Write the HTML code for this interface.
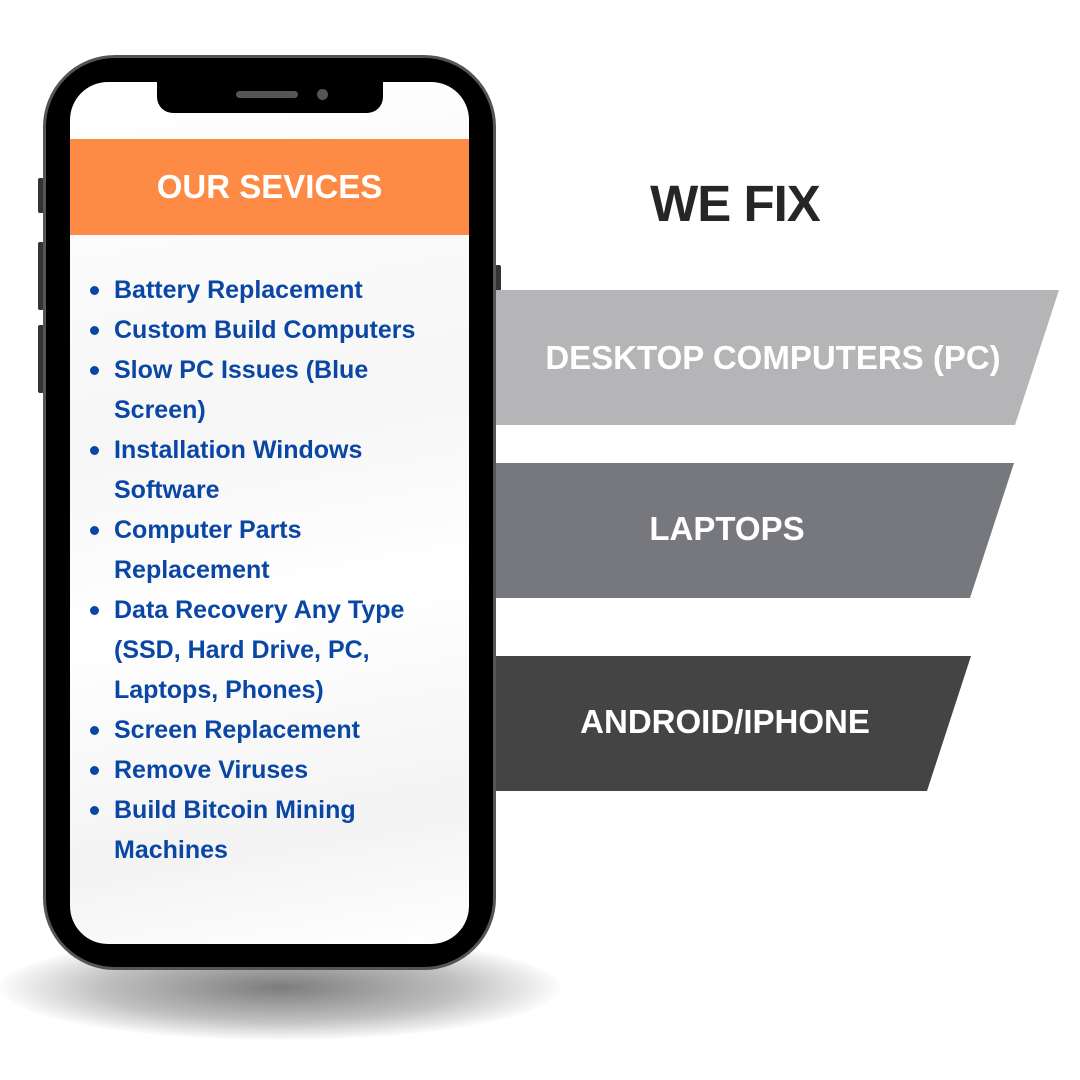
<!DOCTYPE html>
<html><head><meta charset="utf-8"><style>
*{margin:0;padding:0;box-sizing:border-box}
body{width:1080px;height:1080px;background:#fff;position:relative;overflow:hidden;font-family:"Liberation Sans",sans-serif}
.abs{position:absolute}
.shadow{left:0;top:935px;width:560px;height:105px;border-radius:50%;background:radial-gradient(ellipse at center,rgba(110,110,110,.9) 0%,rgba(150,150,150,.6) 45%,rgba(255,255,255,0) 72%)}
.phone{left:43px;top:55px;width:453px;height:915px;border-radius:72px;background:#000;border:3px solid #555}
.screen{left:70px;top:82px;width:399px;height:862px;border-radius:38px;background:linear-gradient(170deg,#fff 0%,#f6f6f6 40%,#fff 60%,#f3f3f3 85%,#fff 100%);overflow:hidden}
.notch{left:157px;top:80px;width:226px;height:33px;background:#000;border-radius:0 0 16px 16px}
.spk{left:236px;top:91px;width:62px;height:7px;border-radius:4px;background:#555}
.cam{left:317px;top:89px;width:11px;height:11px;border-radius:50%;background:#555}
.btn{background:#333;width:6px;border-radius:2px}
.hdr{left:70px;top:139px;width:399px;height:96px;background:#FD8B45;color:#fff;font-weight:bold;font-size:33px;text-align:center;line-height:96px}
.l{position:absolute;left:114px;font-weight:bold;font-size:25px;color:#0A47A5;line-height:40px;white-space:nowrap}
.b{position:absolute;left:90px;width:9px;height:9px;border-radius:50%;background:#0A47A5}
.bt{position:absolute;color:#fff;font-weight:bold;font-size:33px;line-height:135px;text-align:center;white-space:nowrap}
</style></head><body>
<div class="abs shadow"></div>
<div class="abs btn" style="left:38px;top:178px;height:35px"></div>
<div class="abs btn" style="left:38px;top:242px;height:68px"></div>
<div class="abs btn" style="left:38px;top:325px;height:68px"></div>
<div class="abs btn" style="left:495px;top:265px;height:108px"></div>
<div class="abs phone"></div>
<div class="abs screen"></div>
<div class="abs notch"></div>
<div class="abs spk"></div>
<div class="abs cam"></div>
<div class="abs hdr">OUR SEVICES</div>

<div class="b" style="top:286px"></div><div class="l" style="top:270px">Battery Replacement</div>
<div class="b" style="top:326px"></div><div class="l" style="top:310px">Custom Build Computers</div>
<div class="b" style="top:366px"></div><div class="l" style="top:350px">Slow PC Issues (Blue</div>
<div class="l" style="top:390px">Screen)</div>
<div class="b" style="top:446px"></div><div class="l" style="top:430px">Installation Windows</div>
<div class="l" style="top:470px">Software</div>
<div class="b" style="top:526px"></div><div class="l" style="top:510px">Computer Parts</div>
<div class="l" style="top:550px">Replacement</div>
<div class="b" style="top:606px"></div><div class="l" style="top:590px">Data Recovery Any Type</div>
<div class="l" style="top:630px">(SSD, Hard Drive, PC,</div>
<div class="l" style="top:670px">Laptops, Phones)</div>
<div class="b" style="top:726px"></div><div class="l" style="top:710px">Screen Replacement</div>
<div class="b" style="top:766px"></div><div class="l" style="top:750px">Remove Viruses</div>
<div class="b" style="top:806px"></div><div class="l" style="top:790px">Build Bitcoin Mining</div>
<div class="l" style="top:830px">Machines</div>

<div class="abs" style="left:585px;top:174px;width:300px;text-align:center;font-weight:900;font-size:51px;color:#262626;letter-spacing:-1px">WE FIX</div>

<svg class="abs" style="left:0;top:0" width="1080" height="1080">
<polygon points="496,290 1059,290 1015,425 496,425" fill="#B5B5B7"/>
<polygon points="496,463 1014,463 970,598 496,598" fill="#76787D"/>
<polygon points="496,656 971,656 927,791 496,791" fill="#444444"/>
</svg>
<div class="bt" style="left:523px;top:290px;width:500px">DESKTOP COMPUTERS (PC)</div>
<div class="bt" style="left:527px;top:461px;width:400px">LAPTOPS</div>
<div class="bt" style="left:525px;top:654px;width:400px">ANDROID/IPHONE</div>
</body></html>
